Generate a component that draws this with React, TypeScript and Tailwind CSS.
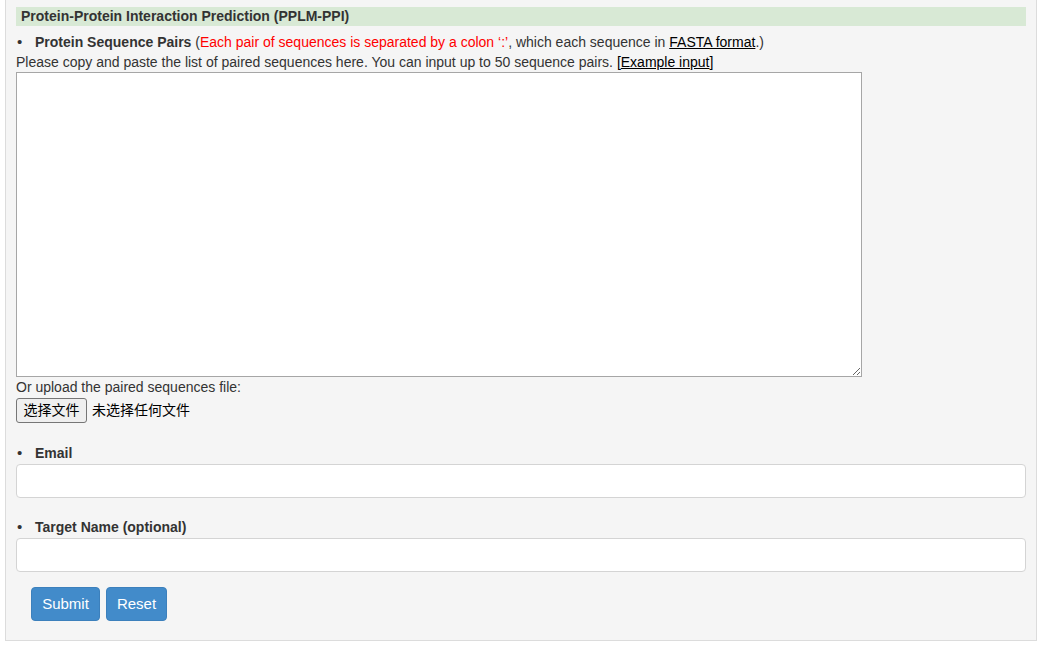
import React from "react";

export default function App() {
  return (
    <div
      className="w-[1042px] h-[645px] bg-white overflow-hidden text-[14px] text-[#333]"
      style={{ fontFamily: '"Liberation Sans", Arial, "Noto Sans CJK SC", sans-serif' }}
    >
      <div className="ml-[5px] w-[1032px] h-[641px] bg-[#f5f5f5] border-x border-b border-[#dcdcdc] px-[10px] pt-[7px]">
        <div className="h-[19px] bg-[#d8e9d5] pl-[5px] font-bold text-[14px] leading-[19px] text-[#333]">
          Protein-Protein Interaction Prediction (PPLM-PPI)
        </div>
        <div className="mt-[6px] flex leading-[20px]">
          <span className="w-[19px] pl-[1px] text-[15px]">•</span>
          <span>
            <b>Protein Sequence Pairs</b> (
            <span className="text-[#f00]">Each pair of sequences is separated by a colon ‘:’</span>, which each
            sequence in <span className="underline text-black">FASTA format</span>.)
          </span>
        </div>
        <div className="leading-[20px]">
          Please copy and paste the list of paired sequences here. You can input up to 50 sequence pairs.{" "}
          <span className="text-black">
            [<span className="underline">Example input</span>]
          </span>
        </div>
        <textarea className="block w-[846px] h-[305px] bg-white border border-[#a6a6a6] resize outline-none" />
        <div className="leading-[20px]">Or upload the paired sequences file:</div>
        <div className="mt-[1px] flex items-center">
          <div className="h-[25px] w-[71px] flex items-center justify-center bg-[#efefef] border border-[#767676] rounded-[3px] text-[14px] text-black">
            选择文件
          </div>
          <span className="ml-[5px] text-[14px] text-black">未选择任何文件</span>
        </div>
        <div className="mt-[20px] flex leading-[20px]">
          <span className="w-[19px] pl-[1px] text-[15px]">•</span>
          <b>Email</b>
        </div>
        <div className="mt-[1px] h-[34px] w-[1010px] bg-white border border-[#d4d4d4] rounded-[4px]" />
        <div className="mt-[19px] flex leading-[20px]">
          <span className="w-[19px] pl-[1px] text-[15px]">•</span>
          <b>Target Name (optional)</b>
        </div>
        <div className="mt-[1px] h-[34px] w-[1010px] bg-white border border-[#d4d4d4] rounded-[4px]" />
        <div className="mt-[15px] ml-[15px] flex gap-[6px]">
          <button className="h-[34px] w-[69px] bg-[#428bca] border border-[#3c80bc] rounded-[4px] text-white text-[15px]">
            Submit
          </button>
          <button className="h-[34px] w-[61px] bg-[#428bca] border border-[#3c80bc] rounded-[4px] text-white text-[15px]">
            Reset
          </button>
        </div>
      </div>
    </div>
  );
}
